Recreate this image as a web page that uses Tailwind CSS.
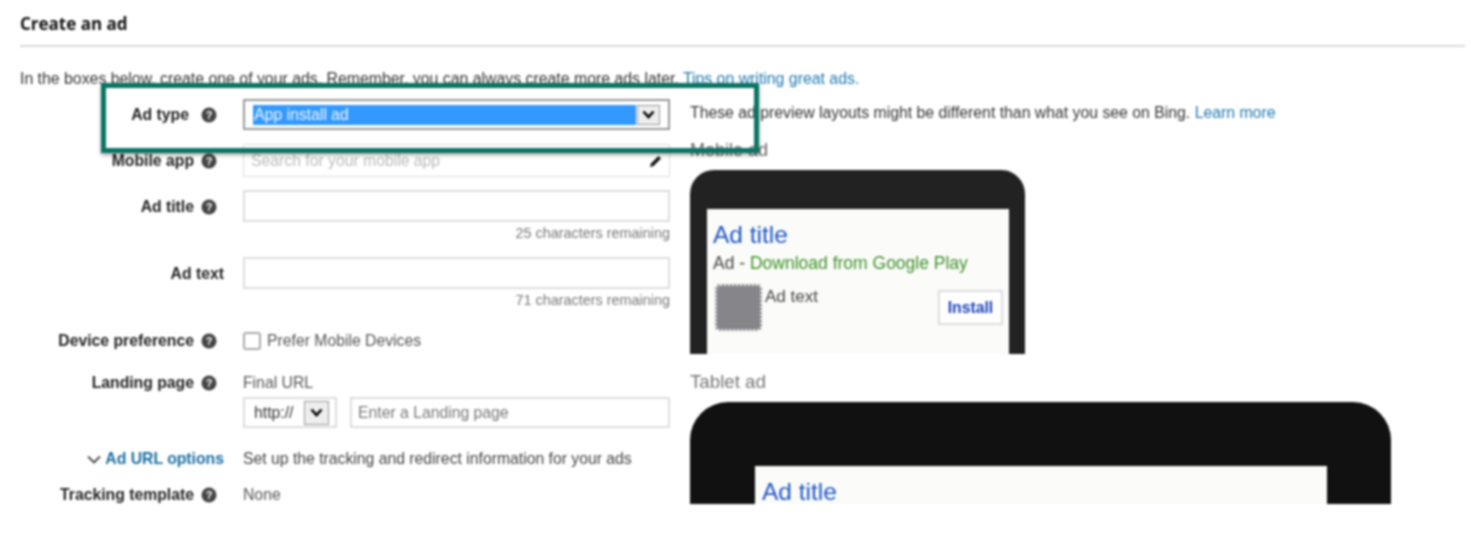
<!DOCTYPE html>
<html lang="en">

<head>
  <meta charset="UTF-8">
  <title>Create an ad</title>
  <script src="https://cdn.jsdelivr.net/npm/@tailwindcss/browser@4"></script>
</head>

<body class="bg-white">
  <div class="relative w-[1471px] h-[545px] overflow-hidden font-['Liberation_Sans',sans-serif] text-[15.75px] text-[#555] blur-[0.8px]">
    <div class="pl-5 pr-[6px] pt-[14px]">
      <h1 class="h-[20px] leading-[20px] text-[17px] font-bold text-[#111] font-['Open_Sans',sans-serif]">Create an ad</h1>
      <div class="mt-[11px] h-[2px] bg-[#d9d9d9]"></div>
      <p class="mt-[24px] h-[16px] leading-[16px] text-[15.85px] text-[#333]">In the boxes below, create one of your ads. Remember, you can always create more ads later. <span class="text-[#1f7ab0]">Tips on writing great ads.</span></p>
    </div>

    <div class="flex pt-[11px]">
      <!-- form column -->
      <div class="w-[690px] shrink-0">
        <div class="flex h-[33px] items-center">
          <div class="w-[243px] pr-[26px] flex justify-end items-center gap-[12px] font-bold text-[#222]">Ad type
            <svg class="w-[16px] h-[16px]" viewBox="0 0 16 16"><circle cx="8" cy="8" r="7.5" fill="#444"/><text x="8" y="12" text-anchor="middle" font-size="11" font-weight="bold" fill="#fff" font-family="Liberation Sans">?</text></svg>
          </div>
          <div class="w-[427px] h-[31px] border-2 border-[#999] flex items-center px-[8px] gap-[1px]">
            <div class="flex-1 h-[20px] bg-[#3399ff] text-[#e8f2ff] leading-[20px] pl-[1px]">App install ad</div>
            <div class="w-[23px] h-[20px] bg-[#eee] border border-[#999] flex items-center justify-center">
              <svg class="w-[13px] h-[9px]" viewBox="0 0 13 9" fill="none" stroke="#000" stroke-width="2.6"><path d="M1.5 1.5 6.5 7 11.5 1.5"/></svg>
            </div>
          </div>
        </div>

        <div class="flex h-[33px] items-center mt-[13px]">
          <div class="w-[243px] pr-[26px] flex justify-end items-center gap-[7px] font-bold text-[#222]">Mobile app
            <svg class="w-[16px] h-[16px]" viewBox="0 0 16 16"><circle cx="8" cy="8" r="7.5" fill="#444"/><text x="8" y="12" text-anchor="middle" font-size="11" font-weight="bold" fill="#fff" font-family="Liberation Sans">?</text></svg>
          </div>
          <div class="w-[427px] h-[33px] border border-[#ddd] flex items-center justify-between pl-[7px] pr-[6px] text-[#bbb]">Search for your mobile app
            <svg class="w-[14px] h-[14px]" viewBox="0 0 14 14" fill="#111"><path d="M1 13 2 9.500 9.500 2 12 4.500 4.500 12Z"/></svg>
          </div>
        </div>

        <div class="flex h-[32px] items-center mt-[13px]">
          <div class="w-[243px] pr-[26px] pt-[1px] flex justify-end items-center gap-[7px] font-bold text-[#222]">Ad title
            <svg class="w-[16px] h-[16px]" viewBox="0 0 16 16"><circle cx="8" cy="8" r="7.5" fill="#444"/><text x="8" y="12" text-anchor="middle" font-size="11" font-weight="bold" fill="#fff" font-family="Liberation Sans">?</text></svg>
          </div>
          <div class="w-[427px] h-[32px] border-2 border-[#ddd]"></div>
        </div>
        <div class="w-[670px] h-[16px] mt-[3px] leading-[16px] text-right text-[14.4px] text-[#777]">25 characters remaining</div>

        <div class="flex h-[32px] items-center mt-[16px]">
          <div class="w-[243px] pr-[19px] pt-[1px] text-right font-bold text-[#222]">Ad text</div>
          <div class="w-[427px] h-[32px] border-2 border-[#ddd]"></div>
        </div>
        <div class="w-[670px] h-[16px] mt-[3px] leading-[16px] text-right text-[14.4px] text-[#777]">71 characters remaining</div>

        <div class="flex h-[20px] items-center mt-[23px]">
          <div class="w-[243px] pr-[26px] flex justify-end items-center gap-[7px] font-bold text-[#222]">Device preference
            <svg class="w-[16px] h-[16px]" viewBox="0 0 16 16"><circle cx="8" cy="8" r="7.5" fill="#444"/><text x="8" y="12" text-anchor="middle" font-size="11" font-weight="bold" fill="#fff" font-family="Liberation Sans">?</text></svg>
          </div>
          <div class="w-[18px] h-[18px] border-2 border-[#aaa] rounded-[3px]"></div>
          <span class="ml-[6px] text-[#555]">Prefer Mobile Devices</span>
        </div>

        <div class="flex h-[20px] items-center mt-[22px]">
          <div class="w-[243px] pr-[26px] flex justify-end items-center gap-[7px] font-bold text-[#222]">Landing page
            <svg class="w-[16px] h-[16px]" viewBox="0 0 16 16"><circle cx="8" cy="8" r="7.5" fill="#444"/><text x="8" y="12" text-anchor="middle" font-size="11" font-weight="bold" fill="#fff" font-family="Liberation Sans">?</text></svg>
          </div>
          <span class="text-[#555]">Final URL</span>
        </div>

        <div class="flex h-[31px] mt-[4px] pl-[243px]">
          <div class="w-[94px] h-[31px] border-2 border-[#ddd] flex items-center pl-[9px] text-[#333]">http://
            <div class="ml-[11px] w-[25px] h-[24px] bg-[#eee] border border-[#999] flex items-center justify-center">
              <svg class="w-[13px] h-[9px]" viewBox="0 0 13 9" fill="none" stroke="#000" stroke-width="2.6"><path d="M1.5 1.500 6.500 7 11.500 1.500"/></svg>
            </div>
          </div>
          <div class="ml-[13px] w-[320px] h-[31px] border-2 border-[#ddd] flex items-center pl-[6px] text-[#777]">Enter a Landing page</div>
        </div>

        <div class="flex h-[20px] items-center mt-[21px]">
          <div class="w-[243px] pr-[19px] flex justify-end items-center gap-[4px] font-bold text-[#1a6fa3]">
            <svg class="w-[14px] h-[9px]" viewBox="0 0 14 9" fill="none" stroke="#444" stroke-width="1.800"><path d="M1 1.500 7 7.500 13 1.500"/></svg>
            Ad URL options
          </div>
          <span class="text-[#444]">Set up the tracking and redirect information for your ads</span>
        </div>

        <div class="flex h-[20px] items-center mt-[16px]">
          <div class="w-[243px] pr-[26px] flex justify-end items-center gap-[7px] font-bold text-[#222]">Tracking template
            <svg class="w-[16px] h-[16px]" viewBox="0 0 16 16"><circle cx="8" cy="8" r="7.5" fill="#444"/><text x="8" y="12" text-anchor="middle" font-size="11" font-weight="bold" fill="#fff" font-family="Liberation Sans">?</text></svg>
          </div>
          <span class="text-[#555]">None</span>
        </div>
      </div>

      <!-- preview column -->
      <div class="w-[720px] shrink-0">
        <p class="h-[20px] leading-[20px] mt-[5px] text-[15.8px] text-[#333]">These ad preview layouts might be different than what you see on Bing. <span class="text-[#1f7ab0]">Learn more</span></p>
        <p class="h-[20px] leading-[20px] mt-[17px] text-[18px] text-[#666]">Mobile ad</p>
        <div class="mt-[10px] w-[335px] h-[184px] bg-[#222] rounded-t-[24px] pt-[39px] pl-[17px] pr-[16px]">
          <div class="h-[145px] bg-[#fbfcf9] pl-[6px] pr-[6px] pt-[12px]">
            <div class="h-[28px] leading-[28px] text-[24.5px] text-[#1f55c8]">Ad title</div>
            <div class="h-[24px] mt-[2px] leading-[24px] text-[17.5px] text-[#444]">Ad - <span class="text-[#3f8f2a]">Download from Google Play</span></div>
            <div class="flex mt-[9px] pl-[2px]">
              <div class="w-[47px] h-[47px] rounded-[5px] bg-[#85858a] border-2 border-dotted border-[#eee]"></div>
              <div class="ml-[3px] mt-[3px] text-[17px] leading-[20px] text-[#444]">Ad text</div>
              <div class="ml-auto mt-[6px] w-[65px] h-[35px] bg-white border-2 border-[#ddd] flex items-center justify-center font-bold text-[#1f45bb]">Install</div>
            </div>
          </div>
        </div>
        <p class="h-[20px] leading-[20px] mt-[18px] text-[18.7px] text-[#777]">Tablet ad</p>
        <div class="mt-[10px] w-[701px] h-[102px] bg-[#111] rounded-t-[38px] pt-[64px] pl-[65px] pr-[64px]">
          <div class="h-[38px] bg-[#fbfcf9] pl-[7px] pt-[12px]">
            <div class="h-[28px] leading-[28px] text-[24.5px] text-[#1f55c8]">Ad title</div>
          </div>
        </div>
      </div>
    </div>

    <!-- highlight box over the form -->
    <div class="absolute left-[101px] top-[83px] w-[658px] h-[70px] border-[5px] border-[#0a7563] shadow-[0_2px_4px_rgba(0,0,0,0.35)]"></div>
  </div>
</body>

</html>
